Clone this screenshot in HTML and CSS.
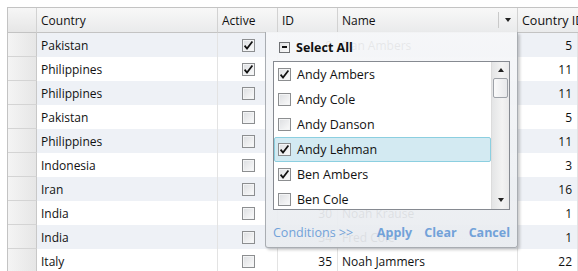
FILE: index.html
```html
<!DOCTYPE html>
<html lang="en">
<head>
  <meta charset="UTF-8">
  <title>Grid Filter</title>
  <link rel="stylesheet" href="styles.css">
</head>
<body>
  <div class="grid-wrap">
    <div class="grid" id="grid">
      <div class="row header-row">
        <div class="cell row-head"></div>
        <div class="cell">Country</div>
        <div class="cell">Active</div>
        <div class="cell">ID</div>
        <div class="cell name-head">Name<span class="filter-btn"><span class="arrow-down"></span></span></div>
        <div class="cell clip">Country ID</div>
      </div>
    </div>

    <!-- Filter popup for the Name column -->
    <div class="filter-popup">
      <div class="select-all">
        <span class="minus-box"><span></span></span>
        <b>Select All</b>
      </div>
      <div class="list-box">
        <div class="items" id="items"></div>
        <div class="scrollbar">
          <span class="arrow-up"></span>
          <span class="thumb"></span>
          <span class="spacer"></span>
          <span class="arrow-down"></span>
        </div>
      </div>
      <div class="popup-footer">
        <span class="conditions">Conditions &gt;&gt;</span>
        <span class="btn">Apply</span>
        <span class="btn">Clear</span>
        <span class="btn">Cancel</span>
      </div>
    </div>
  </div>

  <script>
    const rows = [
      ['Pakistan', true, 0, 'Dan Ambers', 5],
      ['Philippines', true, 3, 'Andy Lehman', 11],
      ['Philippines', false, 7, 'Ben Cole', 11],
      ['Pakistan', false, 12, 'Andy Cole', 5],
      ['Philippines', false, 17, 'Ben Ambers', 11],
      ['Indonesia', false, 21, 'Andy Danson', 3],
      ['Iran', false, 26, 'Fred Ambers', 16],
      ['India', false, 30, 'Noah Krause', 1],
      ['India', false, 34, 'Fred Cole', 1],
      ['Italy', false, 35, 'Noah Jammers', 22]
    ];

    const names = [
      ['Andy Ambers', true],
      ['Andy Cole', false],
      ['Andy Danson', false],
      ['Andy Lehman', true],
      ['Ben Ambers', true],
      ['Ben Cole', false]
    ];

    const tick = '<svg width="11" height="11" viewBox="0 0 11 11"><path d="M1.6 5.6 L4 8.6 L9.4 1.4" fill="none" stroke="#111" stroke-width="1.7"/></svg>';

    function checkBox(checked) {
      return '<span class="check">' + (checked ? tick : '') + '</span>';
    }

    const grid = document.getElementById('grid');
    rows.forEach((r, i) => {
      const row = document.createElement('div');
      row.className = 'row' + (i % 2 === 0 ? ' alt' : '');
      row.innerHTML =
        '<div class="cell row-head"></div>' +
        '<div class="cell">' + r[0] + '</div>' +
        '<div class="cell center">' + checkBox(r[1]) + '</div>' +
        '<div class="cell num">' + r[2] + '</div>' +
        '<div class="cell">' + r[3] + '</div>' +
        '<div class="cell num">' + r[4] + '</div>';
      grid.appendChild(row);
    });

    const items = document.getElementById('items');
    names.forEach((n, i) => {
      const item = document.createElement('div');
      item.className = 'item' + (i === 3 ? ' selected' : '');
      item.innerHTML = checkBox(n[1]) + '<span>' + n[0] + '</span>';
      items.appendChild(item);
    });
  </script>
</body>
</html>
```

FILE: styles.css
```css
body {
  margin: 0;
  font-family: "Open Sans", "Noto Sans", sans-serif;
  font-size: 12px;
  color: #111;
  background-color: #fff;
}

.grid-wrap {
  position: relative;
  padding: 7px 0 0 7px;
  height: 264px;
  overflow: hidden;
}

.grid {
  border-left: 1px solid #c3c3c3;
  border-top: 1px solid #c3c3c3;
}

.row {
  display: grid;
  grid-template-columns: 29px 181px 60px 60px 180px 60px;
  height: 24px;
}

.row.alt {
  background-color: #eef1f6;
}

.cell {
  box-sizing: border-box;
  display: flex;
  align-items: center;
  padding: 0 4px;
  border-right: 1px solid #e3e3e3;
  white-space: nowrap;
  overflow: hidden;
}

.cell.num {
  justify-content: flex-end;
  padding-right: 5px;
}

.cell.center {
  justify-content: center;
  padding: 0 0 0 2px;
}

.row-head {
  border-right: 1px solid #c8c8c8;
  border-bottom: 1px solid #d4d4d4;
  background: linear-gradient(to right, #f4f4f4, #e6e6e6);
}

.header-row {
  height: 25px;
  background: linear-gradient(#f8f8f8, #e9eaeb);
}

.header-row .cell {
  border-right: 1px solid #d2d2d2;
  border-bottom: 1px solid #c3c3c3;
}

.header-row .row-head {
  background: linear-gradient(#f6f6f6, #e6e6e6);
}

.header-row .clip {
  padding-right: 0;
  border-right: none;
  font-size: 12.5px;
}

.name-head {
  position: relative;
}

.filter-btn {
  position: absolute;
  right: 0;
  top: 4px;
  width: 18px;
  height: 16px;
  border-left: 1px solid #c9c9c9;
  display: flex;
  align-items: center;
  justify-content: center;
}

.arrow-down,
.arrow-up {
  display: block;
  width: 0;
  height: 0;
  border-left: 3.5px solid transparent;
  border-right: 3.5px solid transparent;
}

.arrow-down {
  border-top: 4px solid #222;
}

.arrow-up {
  border-bottom: 4px solid #222;
}

/* checkbox */
.check {
  box-sizing: border-box;
  width: 13px;
  height: 13px;
  border: 1px solid #8c8e90;
  background: linear-gradient(135deg, #dcdee1, #fbfbfb);
  box-shadow: inset 0 0 0 1px #f3f4f5;
  display: flex;
  align-items: center;
  justify-content: center;
  flex-shrink: 0;
}

/* popup */
.filter-popup {
  position: absolute;
  left: 265px;
  top: 32px;
  width: 253px;
  height: 216px;
  box-sizing: border-box;
  border: 1px solid #a9adb2;
  border-top: none;
  border-radius: 0 0 3px 3px;
  background: linear-gradient(rgba(246, 247, 249, 0.93), rgba(233, 236, 240, 0.93));
  box-shadow: 2px 2px 3px rgba(0, 0, 0, 0.2);
}

.select-all {
  display: flex;
  align-items: center;
  gap: 6px;
  height: 29px;
  padding-left: 13px;
  padding-top: 1px;
  box-sizing: border-box;
  font-size: 12.5px;
}

.minus-box {
  box-sizing: border-box;
  width: 11px;
  height: 11px;
  border: 1px solid #6f7174;
  background: linear-gradient(135deg, #e2e3e5, #fbfbfb);
  display: flex;
  align-items: center;
  justify-content: center;
}

.minus-box span {
  width: 5px;
  height: 2px;
  background-color: #111;
}

.list-box {
  margin-left: 7px;
  width: 237px;
  height: 149px;
  box-sizing: border-box;
  border: 1px solid #868a91;
  background-color: #fff;
  display: flex;
}

.items {
  flex: 1;
}

.item {
  box-sizing: border-box;
  height: 25px;
  display: flex;
  align-items: center;
  gap: 6px;
  padding-left: 4px;
  font-size: 12.5px;
}

.item.selected {
  background-color: #d3eaf2;
  border: 1px solid #8ccfe0;
  border-radius: 2px;
  padding-left: 3px;
}

.scrollbar {
  width: 17px;
  display: flex;
  flex-direction: column;
  align-items: center;
  background: linear-gradient(to right, #e4e5e6, #f3f3f3 60%, #e9e9ea);
  border-left: 1px solid #dcdcdc;
}

.scrollbar .arrow-up {
  margin-top: 6px;
}

.thumb {
  box-sizing: border-box;
  width: 15px;
  height: 20px;
  margin-top: 6px;
  border: 1px solid #9ea2a8;
  border-radius: 2px;
  background: linear-gradient(to right, #fafafa, #e7e8ea);
}

.spacer {
  flex: 1;
}

.scrollbar .arrow-down {
  margin-bottom: 7px;
}

.popup-footer {
  display: flex;
  align-items: center;
  gap: 12px;
  margin-top: 12px;
  padding: 0 7px;
  height: 20px;
  color: #72a2d9;
  font-size: 12.5px;
}

.conditions {
  margin-right: auto;
}

.btn {
  font-weight: bold;
}
```
